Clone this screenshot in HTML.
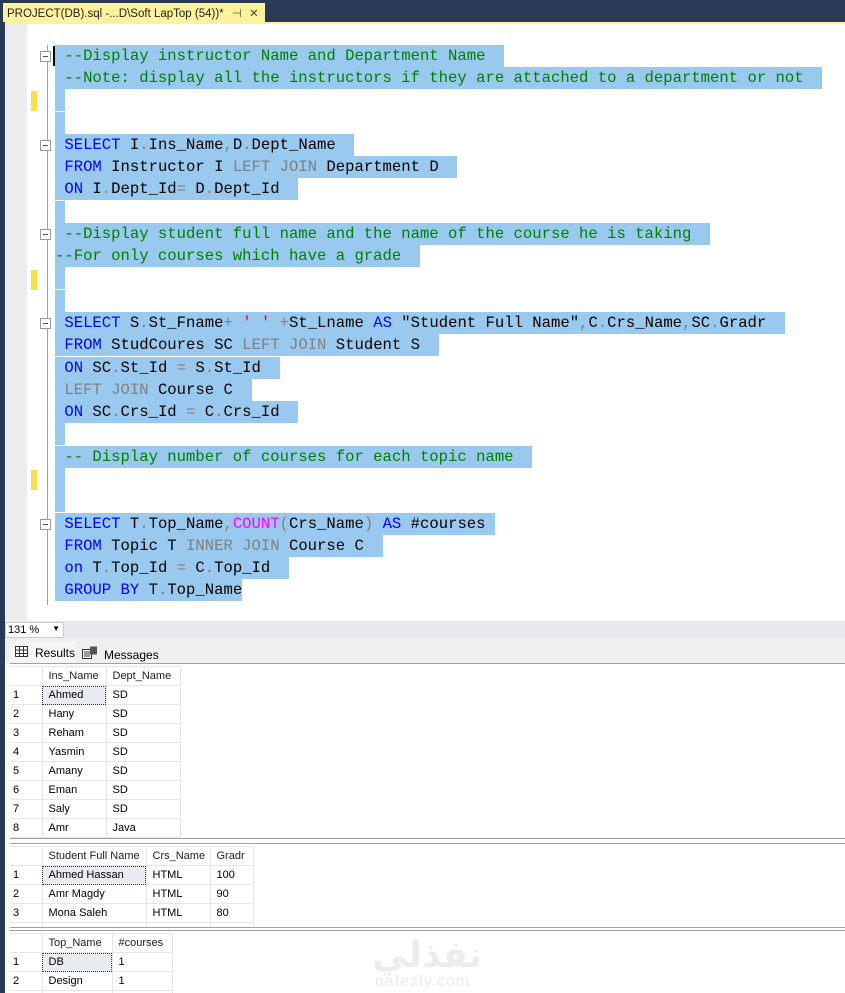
<!DOCTYPE html>
<html><head><meta charset="utf-8"><style>
*{margin:0;padding:0;box-sizing:border-box}
body{width:845px;height:993px;overflow:hidden;background:#fff;position:relative;font-family:"Liberation Sans",sans-serif}
.abs{position:absolute}
#top{left:0;top:0;width:845px;height:22px;background:#293a56}
#tab{left:3px;top:3px;width:262px;height:21px;background:#fff29d;font-size:11.5px;color:#1e1e1e;padding:3px 0 0 4px;white-space:nowrap;overflow:hidden}
#tabline{left:0;top:22px;width:845px;height:2px;background:#fff29d}
#frame{left:0;top:22px;width:5px;height:971px;background:#293a56}
#gutter{left:5px;top:24px;width:22px;height:597px;background:#ececec}
.ln{position:absolute;left:55px;height:22px;font-family:"Liberation Mono",monospace;font-size:15.6px;line-height:22px;white-space:pre;color:#000}
.ln span.h{background:#99c9ef;display:inline-block;height:22px;vertical-align:top}
.c{color:#008000}.k{color:#0000ff}.g{color:#808080}.m{color:#ff00ff}.r{color:#ff0000}
.fold{position:absolute;left:40px;width:11px;height:11px;border:1px solid #999;background:#fff}
.fold:after{content:"";position:absolute;left:2px;top:4px;width:5px;height:1px;background:#555}
.ym{position:absolute;left:31px;width:6px;height:20px;background:#f5e04a}
#vline{left:47px;top:45px;width:1px;height:560px;background:#a0a0a0}
#zoombar{left:5px;top:621px;width:840px;height:17px;background:#e8e8ec}
#zoomsel{left:5px;top:622px;width:59px;height:16px;background:#fff;border:1px solid #ccc;font-size:11px;padding:1px 0 0 2px}
#restabs{left:5px;top:638px;width:840px;height:25px;background:#efefef}
.rt{position:absolute;font-size:12px;top:646px}
.grid{position:absolute;left:10px;width:835px;background:#fff;border-top:1px solid #a0a0a0}
table{border-collapse:collapse;font-size:11px;position:absolute;left:0;top:2px}
td{height:19px;border:1px solid #e6e6e6;padding:0 0 0 6px;color:#000;white-space:nowrap}
td:first-child{padding-left:3px;border-left:none}
tr:first-child td{color:#222}
.sel{background:#e8ebf0;outline:1px dotted #333;outline-offset:-1px}
</style></head><body>
<div id="top" class="abs"></div>
<div id="tab" class="abs">PROJECT(DB).sql -...D\Soft LapTop (54))* <span style="margin-left:5px;color:#555">⊣</span> <span style="margin-left:4px;color:#444">✕</span></div>
<div id="tabline" class="abs"></div>
<div id="frame" class="abs"></div>
<div id="gutter" class="abs"></div>
<div id="vline" class="abs"></div>

<div class="fold" style="top:51px"></div>
<div class="fold" style="top:140px"></div>
<div class="fold" style="top:229px"></div>
<div class="fold" style="top:318px"></div>
<div class="fold" style="top:519px"></div>
<div class="ym" style="top:91px"></div>
<div class="ym" style="top:270px"></div>
<div class="ym" style="top:470px"></div>
<div class="abs" style="left:53px;top:46px;width:2px;height:20px;background:#000"></div>

<div class="ln" style="top:45px"><span class="h c"> --Display instructor Name and Department Name  </span></div>
<div class="ln" style="top:67px"><span class="h c"> --Note: display all the instructors if they are attached to a department or not  </span></div>
<div class="ln" style="top:89px"><span class="h" style="width:10px"></span></div>
<div class="ln" style="top:112px"><span class="h" style="width:10px"></span></div>
<div class="ln" style="top:134px"><span class="h"> <span class="k">SELECT</span> I<span class="g">.</span>Ins_Name<span class="g">,</span>D<span class="g">.</span>Dept_Name  </span></div>
<div class="ln" style="top:156px"><span class="h"> <span class="k">FROM</span> Instructor I <span class="g">LEFT JOIN</span> Department D  </span></div>
<div class="ln" style="top:178px"><span class="h"> <span class="k">ON</span> I<span class="g">.</span>Dept_Id<span class="g">=</span> D<span class="g">.</span>Dept_Id  </span></div>
<div class="ln" style="top:201px"><span class="h" style="width:10px"></span></div>
<div class="ln" style="top:223px"><span class="h c"> --Display student full name and the name of the course he is taking  </span></div>
<div class="ln" style="top:245px"><span class="h c">--For only courses which have a grade  </span></div>
<div class="ln" style="top:267px"><span class="h" style="width:10px"></span></div>
<div class="ln" style="top:290px"><span class="h" style="width:10px"></span></div>
<div class="ln" style="top:312px"><span class="h"> <span class="k">SELECT</span> S<span class="g">.</span>St_Fname<span class="g">+</span> <span class="r">' '</span> <span class="g">+</span>St_Lname <span class="k">AS</span> "Student Full Name"<span class="g">,</span>C<span class="g">.</span>Crs_Name<span class="g">,</span>SC<span class="g">.</span>Gradr  </span></div>
<div class="ln" style="top:334px"><span class="h"> <span class="k">FROM</span> StudCoures SC <span class="g">LEFT JOIN</span> Student S  </span></div>
<div class="ln" style="top:357px"><span class="h"> <span class="k">ON</span> SC<span class="g">.</span>St_Id <span class="g">=</span> S<span class="g">.</span>St_Id  </span></div>
<div class="ln" style="top:379px"><span class="h"> <span class="g">LEFT JOIN</span> Course C  </span></div>
<div class="ln" style="top:401px"><span class="h"> <span class="k">ON</span> SC<span class="g">.</span>Crs_Id <span class="g">=</span> C<span class="g">.</span>Crs_Id  </span></div>
<div class="ln" style="top:423px"><span class="h" style="width:10px"></span></div>
<div class="ln" style="top:446px"><span class="h c"> -- Display number of courses for each topic name  </span></div>
<div class="ln" style="top:468px"><span class="h" style="width:10px"></span></div>
<div class="ln" style="top:490px"><span class="h" style="width:10px"></span></div>
<div class="ln" style="top:513px"><span class="h"> <span class="k">SELECT</span> T<span class="g">.</span>Top_Name<span class="g">,</span><span class="m">COUNT</span><span class="g">(</span>Crs_Name<span class="g">)</span> <span class="k">AS</span> #courses </span></div>
<div class="ln" style="top:535px"><span class="h"> <span class="k">FROM</span> Topic T <span class="g">INNER JOIN</span> Course C  </span></div>
<div class="ln" style="top:557px"><span class="h"> <span class="k">on</span> T<span class="g">.</span>Top_Id <span class="g">=</span> C<span class="g">.</span>Top_Id  </span></div>
<div class="ln" style="top:579px"><span class="h"> <span class="k">GROUP BY</span> T<span class="g">.</span>Top_Name</span></div>

<div id="zoombar" class="abs"></div>
<div id="zoomsel" class="abs">131 % <span style="position:absolute;right:3px;top:1px;font-size:8px">▼</span></div>
<div id="restabs" class="abs"></div>
<div class="abs" style="left:10px;top:641px;width:66px;height:22px;background:#f5f5f5"></div>
<svg class="abs" style="left:15px;top:646px" width="13" height="11"><rect x="0.5" y="0.5" width="12" height="10" fill="#fff" stroke="#333"/><path d="M0 4H13M0 7.5H13M4.5 0V11M8.5 0V11" stroke="#333"/></svg>
<div class="rt" style="left:35px">Results</div>
<svg class="abs" style="left:82px;top:646px" width="16" height="13"><rect x="0.5" y="3.5" width="9" height="9" fill="#fff" stroke="#333"/><rect x="8" y="0.5" width="7" height="8" fill="#555"/><path d="M2 6H8M2 8H8M2 10H8" stroke="#333"/></svg>
<div class="rt" style="left:104px;top:648px">Messages</div>

<div class="grid" style="top:663px;height:176px;border-bottom:1px solid #a0a0a0">
<table><tr><td style="width:32px"></td><td style="width:64px">Ins_Name</td><td style="width:74px">Dept_Name</td></tr>
<tr><td>1</td><td class="sel">Ahmed</td><td>SD</td></tr>
<tr><td>2</td><td>Hany</td><td>SD</td></tr>
<tr><td>3</td><td>Reham</td><td>SD</td></tr>
<tr><td>4</td><td>Yasmin</td><td>SD</td></tr>
<tr><td>5</td><td>Amany</td><td>SD</td></tr>
<tr><td>6</td><td>Eman</td><td>SD</td></tr>
<tr><td>7</td><td>Saly</td><td>SD</td></tr>
<tr><td>8</td><td>Amr</td><td>Java</td></tr></table></div>

<div class="grid" style="top:843px;height:85px;border-bottom:1px solid #a0a0a0;overflow:hidden">
<table><tr><td style="width:32px"></td><td style="width:104px">Student Full Name</td><td style="width:64px">Crs_Name</td><td style="width:43px">Gradr</td></tr>
<tr><td>1</td><td class="sel">Ahmed Hassan</td><td>HTML</td><td>100</td></tr>
<tr><td>2</td><td>Amr Magdy</td><td>HTML</td><td>90</td></tr>
<tr><td>3</td><td>Mona Saleh</td><td>HTML</td><td>80</td></tr>
<tr><td>4</td><td>Ahmed Mohamed</td><td>HTML</td><td>70</td></tr></table></div>

<div class="grid" style="top:930px;height:63px;overflow:hidden">
<table><tr><td style="width:32px"></td><td style="width:70px">Top_Name</td><td style="width:60px">#courses</td></tr>
<tr><td>1</td><td class="sel">DB</td><td>1</td></tr>
<tr><td>2</td><td>Design</td><td>1</td></tr>
<tr><td>3</td><td></td><td></td></tr></table></div>

<div class="abs" style="left:372px;top:935px;font-size:36px;font-weight:bold;color:#ececec;font-family:'DejaVu Sans',sans-serif">نفذلي</div>
<div class="abs" style="left:375px;top:973px;font-size:16px;color:#ececec;letter-spacing:1px">nafezly.com</div>
</body></html>
